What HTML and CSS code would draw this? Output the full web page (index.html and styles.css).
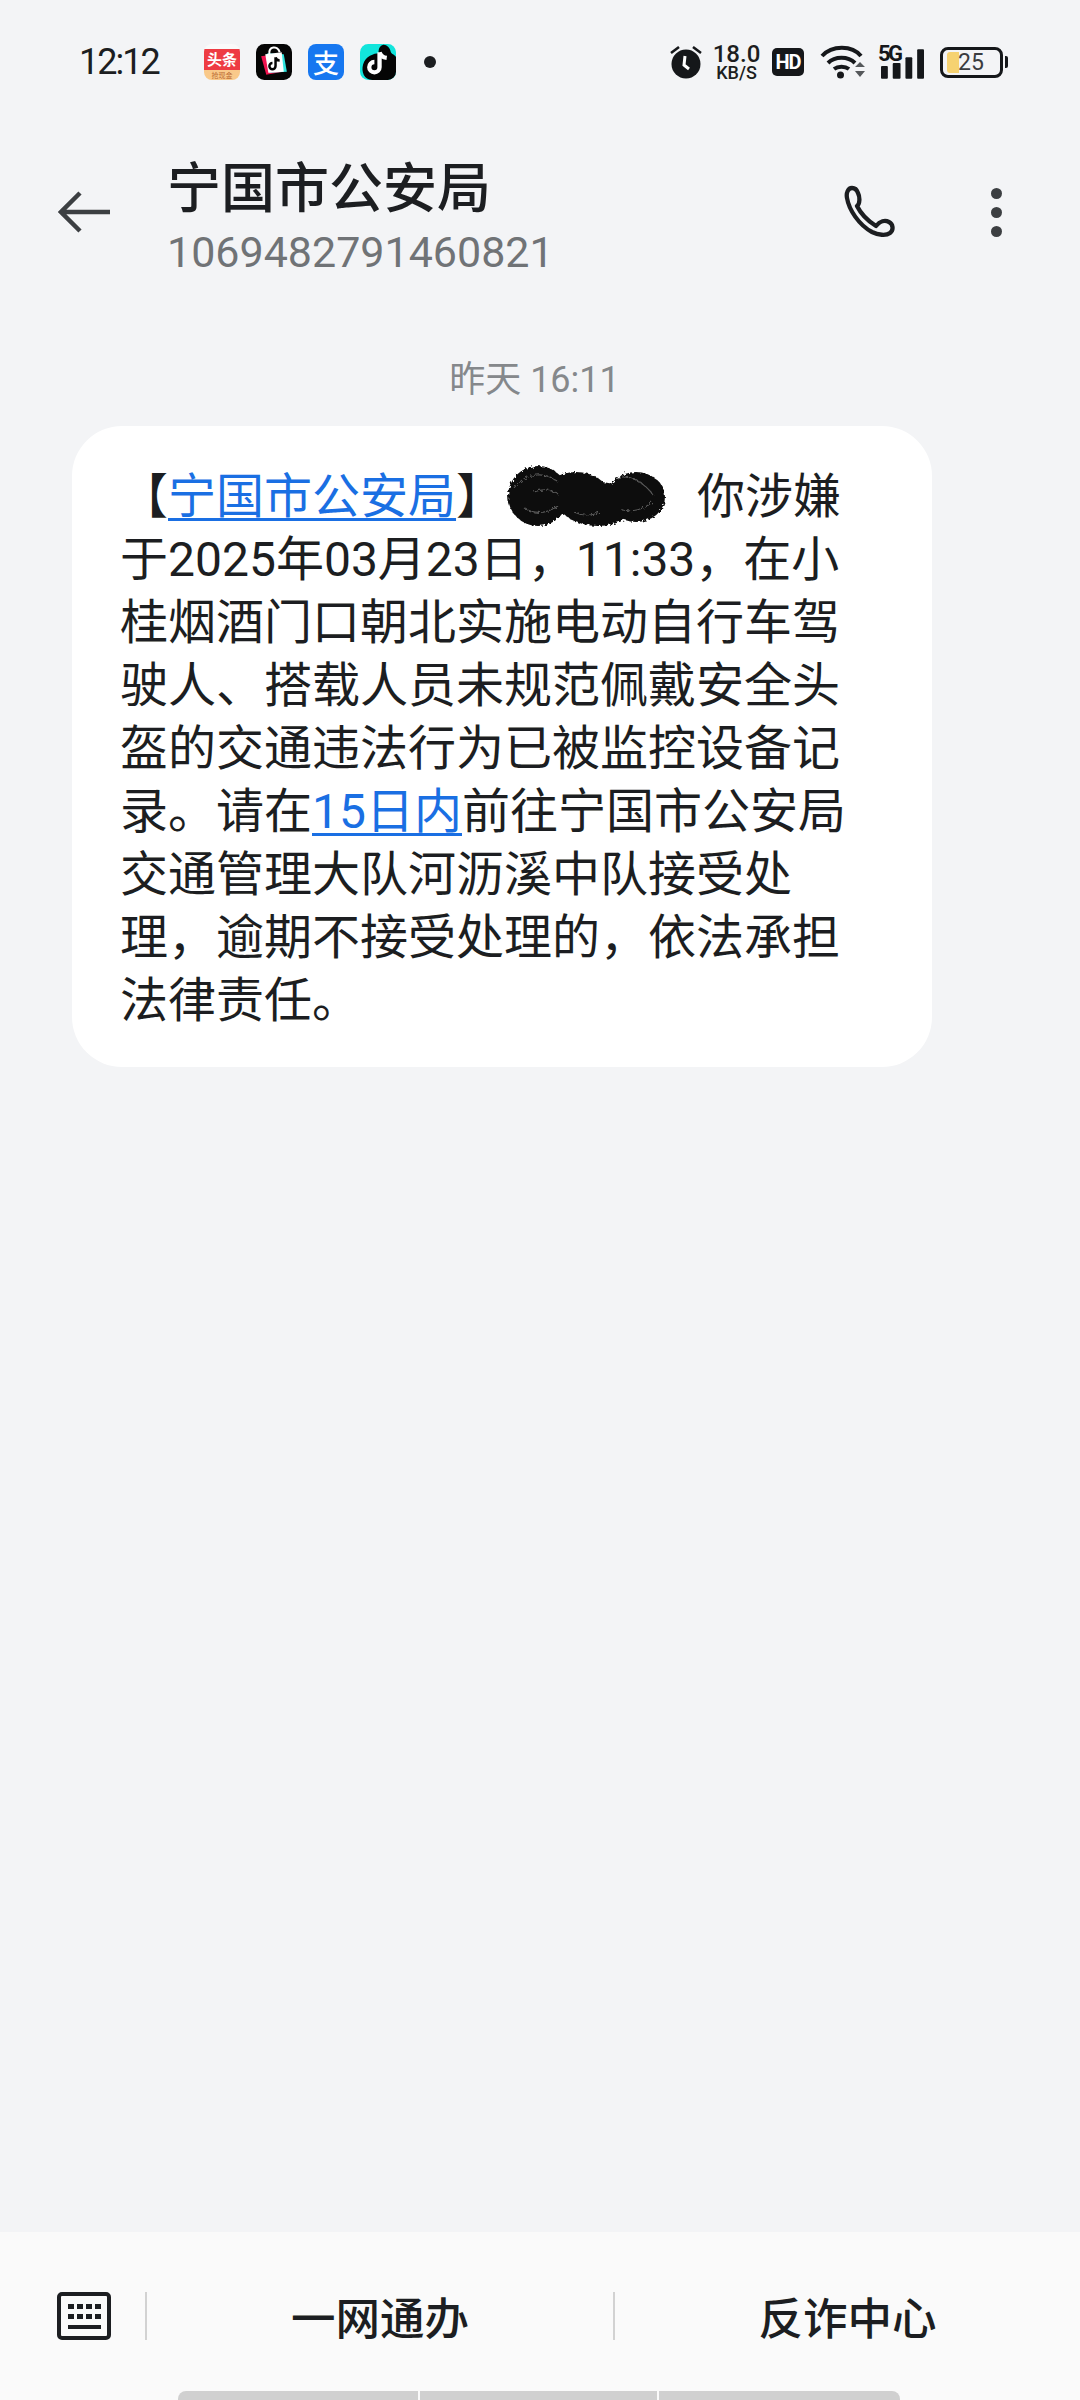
FILE: index.html
```html
<!DOCTYPE html>
<html lang="zh-CN">
<head>
<meta charset="utf-8">
<title>宁国市公安局</title>
<link rel="stylesheet" href="styles.css">
</head>
<body>
<div class="screen">
  <div class="status">
    <span class="time">12:12</span>
    <div class="apps">
      <div class="toutiao-app">
        <span class="toutiao">头条</span>
        <span class="cash">抢现金</span>
      </div>
      <svg class="app" viewBox="0 0 35 35"><rect width="35" height="35" rx="8" fill="#050505"/><path d="M5 12l18-3 3 18-16 3z" fill="#f0124e"/><path d="M11 9l16 1 3 17-17 1z" fill="#2fe3dd"/><path d="M9 10l16-2 2 19-15 1z" fill="#fff"/><path d="M13 10c-1-8 8-9 10-2" fill="none" stroke="#fff" stroke-width="2"/><path d="M19 13v8.500a3 3 0 1 1-3-3M19 13c.5 2 2 3 4 3" fill="none" stroke="#050505" stroke-width="2.400"/></svg>
      <div class="alipay">支</div>
      <svg class="app" viewBox="0 0 35 35"><rect width="35" height="35" rx="8" fill="#12e5dc"/><path d="M22 1c3-1 7 2 8 7 1 2 5 3 5 5v14a8 8 0 0 1-8 8H12C4 35 1 27 3 20 5 12 14 9 18 9c0-4 1-7 4-8z" fill="#050505"/><path d="M19 8v14.500a5 5 0 1 1-5-5M19 8c1 3.500 3 5 7 5.500" fill="none" stroke="#fff" stroke-width="4.200"/></svg>
      <span class="dot"></span>
    </div>
    <div class="sys">
      <svg class="alarm" viewBox="0 0 32 34"><circle cx="16" cy="19" r="14.500" fill="#15171a"/><path d="M1 8l8-6M31 8l-8-6" stroke="#15171a" stroke-width="2.600"/><path d="M15 11l-1 9 5 4" fill="none" stroke="#fff" stroke-width="3"/></svg>
      <div class="speed"><span class="speed-num">18.0</span><span class="speed-unit">KB/S</span></div>
      <span class="hd">HD</span>
      <svg class="wifi" viewBox="0 0 45 34"><g fill="none" stroke="#15171a" stroke-width="4"><path d="M2 11c10-11 30-11 39 0"/><path d="M8 18c7-7 20-7 27 0"/><path d="M14 24c4-3 11-3 15 0"/></g><circle cx="20.500" cy="30" r="3.500" fill="#15171a"/><path d="M35 22l5-5 5 5zM35 26l5 6 5-6z" fill="#55585b"/></svg>
      <div class="net">
        <span class="five-g">5G</span>
        <svg class="bars" viewBox="0 0 44 30"><rect x="0" y="17" width="7" height="13" rx="1"/><rect x="12" y="14" width="8" height="16" rx="1"/><rect x="25" y="8" width="7" height="22" rx="1"/><rect x="37" y="0" width="7" height="30" rx="1"/></svg>
      </div>
      <div class="battery"><span class="charge"></span><span class="level">25</span></div>
      <span class="cap"></span>
    </div>
  </div>

  <header class="head">
    <svg class="back" viewBox="0 0 52 42"><path d="M22 2L3 21l19 19M3 21h49" fill="none" stroke="#3c3f42" stroke-width="4.500"/></svg>
    <div class="who">
      <div class="name">宁国市公安局</div>
      <div class="number">1069482791460821</div>
    </div>
    <svg class="phone" viewBox="0 0 52 54"><path d="M8 3C4 3 2 8 3 13c2 12 12 27 25 34 6 3 14 4 18 1 4-3 3-9-1-11-4-2-9-1-13 4-8-5-15-12-19-20 3-2 3-9 1-13-1-3-3-5-6-5z" fill="none" stroke="#1c1e21" stroke-width="4.300" stroke-linejoin="round"/></svg>
    <div class="more"><span></span><span></span><span></span></div>
  </header>

  <main class="thread">
    <div class="stamp">昨天 16:11</div>
    <div class="bubble">【<a class="link">宁国市公安局</a>】<svg class="scribble" viewBox="0 0 164 63"><defs><filter id="rough" x="-5%" y="-5%" width="110%" height="110%"><feTurbulence type="fractalNoise" baseFrequency="0.35" numOctaves="2" seed="4"/><feDisplacementMap in="SourceGraphic" scale="5"/></filter></defs><g filter="url(#rough)"><g fill="#0a0a0a"><ellipse cx="34" cy="32" rx="30" ry="30"/><ellipse cx="72" cy="30" rx="32" ry="22"/><ellipse cx="94" cy="40" rx="38" ry="22"/><ellipse cx="132" cy="33" rx="29" ry="25"/></g><g fill="none" stroke="#5a5a5a" stroke-width="1.200"><path d="M10 24c10-14 30-18 44-6M20 44c10 6 22 6 34-2M30 28c8-3 16-3 24 2M112 14c14-4 28 4 38 18M118 46c10 2 22 0 30-8M70 48c8 4 18 4 26 0"/></g></g></svg><span class="gap"></span>你涉嫌<br>于2025年03月23日，11:33，在小<br>桂烟酒门口朝北实施电动自行车驾<br>驶人、搭载人员未规范佩戴安全头<br>盔的交通违法行为已被监控设备记<br>录。请在<a class="link">15日内</a>前往宁国市公安局<br>交通管理大队河沥溪中队接受处<br>理，逾期不接受处理的，依法承担<br>法律责任。</div>
  </main>

  <footer class="bar">
    <div class="actions">
      <div class="kbd-cell">
        <svg class="kbd" viewBox="0 0 54 48"><rect x="2" y="2" width="50" height="44" rx="3" fill="none" stroke="#1c1e21" stroke-width="4"/><g fill="#1c1e21"><rect x="11" y="12" width="6" height="5"/><rect x="20" y="12" width="6" height="5"/><rect x="29" y="12" width="6" height="5"/><rect x="38" y="12" width="6" height="5"/><rect x="11" y="22" width="6" height="5"/><rect x="20" y="22" width="6" height="5"/><rect x="29" y="22" width="6" height="5"/><rect x="38" y="22" width="6" height="5"/><rect x="11" y="33" width="33" height="4"/></g></svg>
      </div>
      <div class="action">一网通办</div>
      <div class="action">反诈中心</div>
    </div>
    <div class="gesture"><span></span><span></span><span></span></div>
  </footer>
</div>
</body>
</html>
```
FILE: styles.css
```css
* { box-sizing: border-box; }
html, body { margin: 0; padding: 0; }
body { font-family: Roboto, "Noto Sans CJK SC", sans-serif; color: #1c1e21; background: #f3f4f6; }
.screen { width: 1080px; height: 2400px; display: flex; flex-direction: column; overflow: hidden; background: #f3f4f6; }

.status { height: 124px; flex: none; padding: 0 72px 0 79px; display: flex; align-items: center; }
.time { font-size: 36px; width: 125px; line-height: 1; color: #1c1e21; letter-spacing: -2px; }
.apps { display: flex; align-items: center; gap: 16px; }
.app { width: 36px; height: 36px; display: block; }
.toutiao-app { width: 36px; height: 36px; border-radius: 8px; overflow: hidden; background: linear-gradient(#fafafa 0 5px, #ee3b43 5px 26px, #f9c98a 26px); display: flex; flex-direction: column; align-items: center; padding-top: 5px; font-family: "Noto Sans CJK SC", sans-serif; }
.toutiao { font-size: 15px; line-height: 20px; font-weight: 700; color: #fff; }
.cash { font-size: 7px; line-height: 9px; margin-top: 2px; color: #b96a32; }
.alipay { width: 36px; height: 36px; border-radius: 8px; background: #1677f0; color: #fff; font-family: "Noto Sans CJK SC", sans-serif; font-size: 26px; line-height: 36px; font-weight: 500; text-align: center; }
.dot { width: 12px; height: 12px; border-radius: 50%; background: #1c1e21; margin-left: 12px; }

.sys { margin-left: auto; display: flex; align-items: center; height: 40px; }
.alarm { width: 32px; height: 34px; display: block; margin-right: 11px; }
.speed { width: 47px; display: flex; flex-direction: column; align-items: center; color: #1c1e21; margin-right: 12px; }
.speed-num { font-size: 24px; line-height: 20px; font-weight: 500; }
.speed-unit { font-size: 18px; line-height: 17px; font-weight: 500; }
.hd { width: 32px; height: 28px; border-radius: 5px; background: #15171a; color: #fff; font-size: 20px; line-height: 28px; font-weight: 700; text-align: center; letter-spacing: -1px; margin-right: 16px; }
.wifi { width: 45px; height: 34px; display: block; margin-right: 13px; }
.net { position: relative; width: 46px; height: 34px; margin-right: 16px; }
.five-g { position: absolute; left: 0; top: -2px; font-size: 22px; line-height: 22px; font-weight: 700; letter-spacing: -2.500px; color: #15171a; }
.bars { position: absolute; right: 0; bottom: 0; width: 43px; height: 30px; fill: #15171a; }
.battery { position: relative; width: 63px; height: 31px; border: 3px solid #15171a; border-radius: 8px; }
.charge { position: absolute; left: 4px; top: 2px; bottom: 2px; width: 12px; background: #f6d271; border-radius: 3px 0 0 3px; }
.level { position: absolute; left: 15px; top: 0; font-size: 23px; line-height: 25px; color: #3a3c3f; }
.cap { width: 3px; height: 12px; margin-left: 2px; background: #15171a; border-radius: 0 2px 2px 0; }

.head { height: 176px; flex: none; display: flex; align-items: center; padding: 0 78px 0 58px; }
.back { width: 52px; height: 42px; display: block; margin-right: 57px; }
.who { flex: 1; margin-top: 4px; }
.name { font-size: 54px; line-height: 68px; font-weight: 500; color: #1c1e21; font-family: "Noto Sans CJK SC", sans-serif; }
.number { font-size: 43px; line-height: 50px; color: #707376; margin-top: 8px; }
.phone { width: 52px; height: 54px; display: block; margin-right: 95px; }
.more { display: flex; flex-direction: column; gap: 8px; }
.more span { width: 11px; height: 11px; border-radius: 50%; background: #3c3f42; }

.thread { flex: 1; min-height: 0; }
.stamp { font-size: 36px; line-height: 44px; color: #85888b; text-align: center; margin-top: 58px; padding-right: 11px; }
.bubble { width: 860px; margin: 24px 0 0 72px; padding: 39px 0 35px 48px; background: #fff; border-radius: 50px; font-size: 48px; line-height: 63px; white-space: nowrap; color: #1c1e21; }
.link { color: #1a6fe3; text-decoration: underline; text-decoration-thickness: 3px; text-underline-offset: 5px; }
.scribble { width: 164px; height: 63px; margin: -10px 0; vertical-align: -4px; }
.gap { display: inline-block; width: 29px; }

.bar { flex: none; height: 168px; background: #fafafa; position: relative; }
.actions { display: grid; grid-template-columns: 145px 468px 467px; padding-top: 60px; }
.kbd-cell { padding-left: 57px; height: 48px; }
.kbd { width: 54px; height: 48px; display: block; }
.action { height: 48px; line-height: 48px; text-align: center; font-size: 44.500px; font-weight: 500; font-family: "Noto Sans CJK SC", sans-serif; border-left: 2px solid #d2d2d2; color: #1c1e21; }
.gesture { position: absolute; left: 178px; width: 722px; bottom: 0; height: 9px; display: grid; grid-template-columns: 240px 237px 1fr; gap: 2px; }
.gesture span { background: #d0d0d0; }
.gesture span:first-child { border-radius: 8px 0 0 0; }
.gesture span:last-child { border-radius: 0 8px 0 0; }
```
